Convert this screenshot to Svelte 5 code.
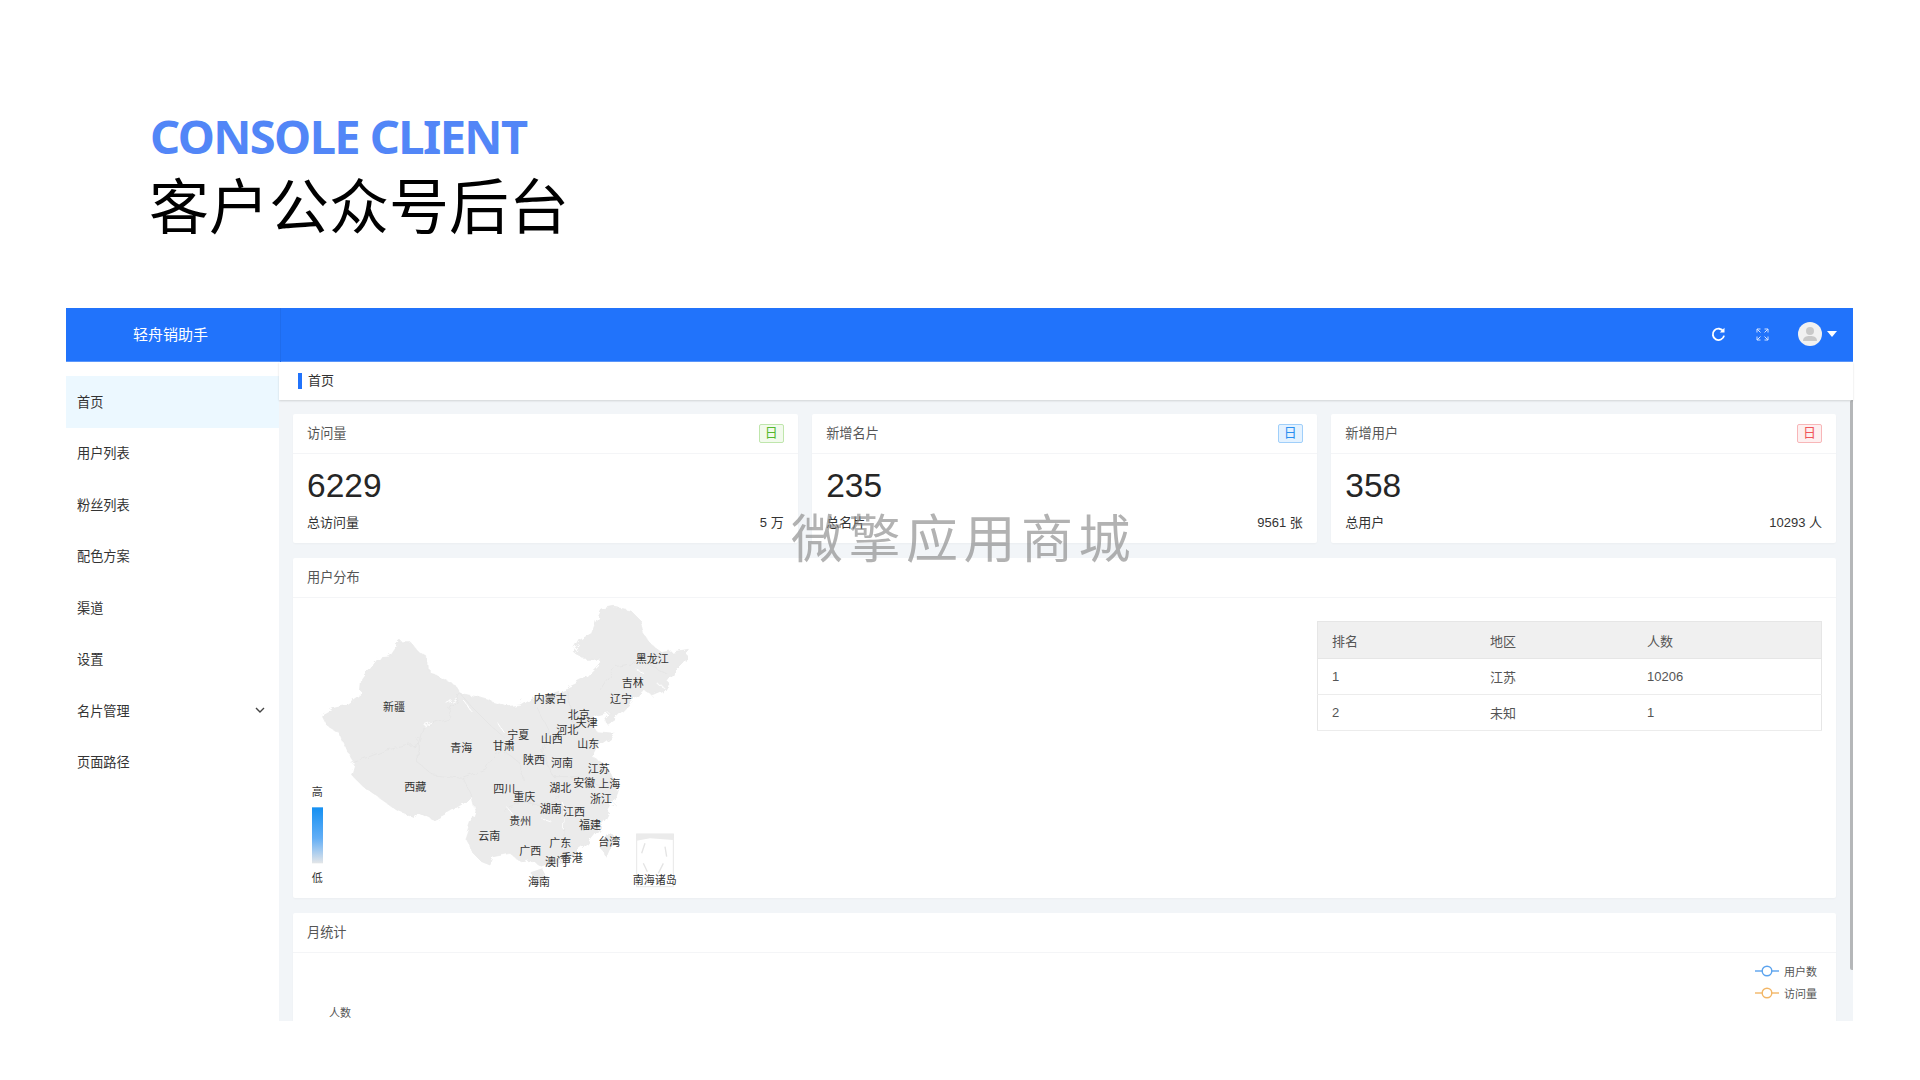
<script>
  const menu = [
    { name: '首页', active: true },
    { name: '用户列表' },
    { name: '粉丝列表' },
    { name: '配色方案' },
    { name: '渠道' },
    { name: '设置' },
    { name: '名片管理', sub: true },
    { name: '页面路径' }
  ];
  const stats = [
    { title: '访问量', tone: 'green', value: '6229', label: '总访问量', total: '5 万' },
    { title: '新增名片', tone: 'blue', value: '235', label: '总名片', total: '9561 张' },
    { title: '新增用户', tone: 'red', value: '358', label: '总用户', total: '10293 人' }
  ];
  const ranks = [
    { rank: 1, area: '江苏', count: 10206 },
    { rank: 2, area: '未知', count: 1 }
  ];
  const provinces = [
    ['黑龙江', 1087, 208], ['吉林', 1028, 278], ['辽宁', 993, 328], ['内蒙古', 781, 326],
    ['北京', 866, 374], ['天津', 890, 400], ['河北', 832, 420], ['宁夏', 685, 435],
    ['山西', 785, 447], ['甘肃', 641, 467], ['山东', 895, 461], ['青海', 514, 475],
    ['陕西', 732, 510], ['河南', 816, 520], ['江苏', 926, 538], ['新疆', 312, 350],
    ['西藏', 376, 591], ['四川', 643, 596], ['重庆', 703, 622], ['湖北', 811, 594],
    ['安徽', 883, 580], ['上海', 958, 582], ['浙江', 933, 628], ['湖南', 782, 656],
    ['江西', 852, 666], ['贵州', 691, 692], ['福建', 900, 706], ['云南', 598, 737],
    ['广东', 811, 760], ['台湾', 958, 755], ['广西', 721, 782], ['澳门', 798, 815],
    ['香港', 845, 805], ['海南', 747, 875], ['南海诸岛', 1094, 870]
  ];
  const china = 'M95 375 L130 355 175 345 210 320 215 265 260 205 300 200 330 155 360 155 385 185 410 200 412 240 450 265 495 285 510 310 560 320 610 335 650 350 690 345 730 320 790 310 830 295 880 270 925 225 930 205 880 205 850 185 870 150 905 130 920 90 935 60 975 52 1020 60 1050 90 1060 130 1085 165 1120 190 1195 178 1180 215 1160 235 1140 270 1120 300 1085 315 1060 300 1030 330 1000 360 975 385 950 400 945 385 960 365 920 375 900 395 920 425 975 430 950 450 920 470 905 500 940 520 960 550 985 590 965 650 945 690 920 720 880 770 840 800 790 820 760 830 745 825 730 810 700 820 660 790 610 800 600 825 575 815 550 790 525 745 540 700 555 660 545 620 520 640 470 670 430 690 380 665 370 680 320 660 270 625 220 590 185 555 195 520 180 500 150 430 110 405 Z';
  const borders = [
    'M410 405 L470 385 510 310 545 350 600 405 640 440',
    'M185 520 L290 480 385 460 400 410',
    'M385 460 L385 520 430 555 520 565 545 620',
    'M520 565 L590 540 610 500 640 480 690 520 700 570',
    'M640 660 L700 640 760 640 810 620 820 700 825 790',
    'M930 300 L975 230 1060 215 1130 250',
    'M740 350 L780 430 760 490 790 560 880 560 930 590',
    'M830 300 L850 400 900 395'
  ];
  const flecks = 'M470 340L500 325M525 335L545 365M400 405L430 395M620 395L640 425M820 640L818 715M650 650L665 670M760 690L790 700M1040 240L1060 248M1100 280L1120 290';
</script>

<div class="page">
  <header class="intro">
    <h1>CONSOLE CLIENT</h1>
    <h2>客户公众号后台</h2>
  </header>

  <div class="shot">
    <div class="topbar">
      <div class="brand">轻舟销助手</div>
      <div class="tools">
        <svg class="tool" width="15" height="15" viewBox="0 0 14 14" fill="none" stroke="#fff" stroke-width="1.7">
          <path d="M11.6 4.2A5.3 5.3 0 1 0 12.2 8" />
          <path d="M12.6 0.6V5.2H8.2" fill="#fff" stroke="none" />
        </svg>
        <svg class="tool" width="13" height="13" viewBox="0 0 13 13" fill="none" stroke="#d4e3ff" stroke-width="1">
          <path d="M1 4.5V1H4.5M1 1L4.5 4.5M12 4.5V1H8.5M12 1L8.5 4.5M1 8.5V12H4.5M1 12L4.5 8.5M12 8.5V12H8.5M12 12L8.5 8.5" />
        </svg>
        <div class="avatar">
          <svg width="24" height="24" viewBox="0 0 24 24" fill="#c9c9c9">
            <circle cx="12" cy="9" r="4" />
            <path d="M5 19C5 15 8 14 12 14S19 15 19 19Z" />
          </svg>
          <span class="caret"></span>
        </div>
      </div>
    </div>

    <div class="layout">
      <nav class="side">
        {#each menu as item}
          <div class="menu-item" class:active={item.active}>
            <span>{item.name}</span>
            {#if item.sub}
              <svg width="12" height="12" viewBox="0 0 12 12" fill="none" stroke="#444" stroke-width="1.4">
                <path d="M2 4L6 8L10 4" />
              </svg>
            {/if}
          </div>
        {/each}
      </nav>

      <main class="main">
        <div class="crumb"><span>首页</span></div>
        <div class="content">
          <div class="stats">
            {#each stats as s}
              <section class="card">
                <div class="card-head">
                  <span>{s.title}</span>
                  <span class="tag {s.tone}">日</span>
                </div>
                <div class="stat-body">
                  <div class="value">{s.value}</div>
                  <div class="stat-foot">
                    <span>{s.label}</span>
                    <span>{s.total}</span>
                  </div>
                </div>
              </section>
            {/each}
          </div>

          <section class="card">
            <div class="card-head">用户分布</div>
            <div class="map-body">
              <svg class="map" width="420" height="300" viewBox="9 24 1260 900">
                <defs>
                  <linearGradient id="range" x1="0" y1="0" x2="0" y2="1">
                    <stop offset="0" stop-color="#1590f2" />
                    <stop offset="0.55" stop-color="#62aef6" />
                    <stop offset="1" stop-color="#e4e6e8" />
                  </linearGradient>
                  <filter id="rough" x="-5%" y="-5%" width="110%" height="110%">
                    <feTurbulence type="fractalNoise" baseFrequency="0.035" numOctaves="3" seed="4" />
                    <feDisplacementMap in="SourceGraphic" scale="26" />
                  </filter>
                </defs>
                <g filter="url(#rough)">
                  <path d={china} fill="#ebebeb" stroke="#e8e8e8" stroke-width="2" stroke-linejoin="round" />
                  <path d="M725 850 L760 838 772 860 750 888 728 875Z" fill="#ebebeb" />
                  <path d="M960 725 L978 745 952 806 930 770Z" fill="#ebebeb" />
                  {#each borders as d}
                    <path {d} fill="none" stroke="#e3e3e3" stroke-width="2" />
                  {/each}
                  <path d={flecks} fill="none" stroke="#fff" stroke-width="3" />
                </g>
                <rect x="1040" y="732" width="110" height="158" fill="#fff" stroke="#e8e8e8" stroke-width="3" />
                <path d="M1040 732H1150V750L1080 745 1040 752Z" fill="#ebebeb" />
                <path d="M1065 760L1055 790M1060 820L1072 845M1125 770L1130 800M1120 820L1105 850" fill="none" stroke="#e4e4e4" stroke-width="4" />
                <rect x="66" y="652" width="33" height="168" fill="url(#range)" />
                <text class="map-label" x="82" y="605">高</text>
                <text class="map-label" x="82" y="863">低</text>
                {#each provinces as [name, x, y]}
                  <text class="map-label" {x} {y}>{name}</text>
                {/each}
              </svg>
              <table class="rank">
                <thead>
                  <tr><th>排名</th><th>地区</th><th>人数</th></tr>
                </thead>
                <tbody>
                  {#each ranks as r}
                    <tr><td>{r.rank}</td><td>{r.area}</td><td>{r.count}</td></tr>
                  {/each}
                </tbody>
              </table>
            </div>
          </section>

          <section class="card">
            <div class="card-head">月统计</div>
            <div class="chart-body">
              <div class="legend">
                <div class="legend-row">
                  <svg width="24" height="12" viewBox="0 0 24 12" fill="#fff" stroke="#5ba3ee" stroke-width="1.4">
                    <path d="M0 6H24" /><circle cx="12" cy="6" r="4.8" />
                  </svg>
                  <span>用户数</span>
                </div>
                <div class="legend-row">
                  <svg width="24" height="12" viewBox="0 0 24 12" fill="#fff" stroke="#f2b666" stroke-width="1.4">
                    <path d="M0 6H24" /><circle cx="12" cy="6" r="4.8" />
                  </svg>
                  <span>访问量</span>
                </div>
              </div>
              <div class="axis-name">人数</div>
            </div>
          </section>
          <div class="scroll-thumb"></div>
        </div>
      </main>
    </div>
  </div>

  <div class="watermark">微擎应用商城</div>
</div>

<style>
  :global(body) {
    margin: 0;
    background: #fff;
    font-family: "Liberation Sans", "Noto Sans CJK SC", sans-serif;
  }

  .page {
    position: relative;
    height: 1080px;
    overflow: hidden;
  }

  .intro {
    height: 308px;
    padding: 109px 0 0 150px;
    box-sizing: border-box;
  }
  h1 {
    margin: 0;
    font-family: "Noto Sans", sans-serif;
    font-size: 47px;
    line-height: 54px;
    font-weight: 700;
    letter-spacing: -1.6px;
    color: #5286f7;
  }
  h2 {
    margin: 4px 0 0 -1px;
    font-family: "Noto Sans CJK SC", sans-serif;
    font-size: 60px;
    line-height: 72px;
    font-weight: 400;
    color: #000;
  }

  .shot {
    margin-left: 66px;
    width: 1787px;
  }

  .topbar {
    display: flex;
    justify-content: space-between;
    height: 54px;
    background: #2173fb;
    box-shadow: inset 0 -1px 0 #5b97fb;
    color: #fff;
  }
  .brand {
    width: 215px;
    box-sizing: border-box;
    padding-left: 67px;
    font-size: 15px;
    line-height: 53px;
    border-right: 1px solid #1f6cec;
  }
  .tools {
    display: flex;
    align-items: center;
    padding: 0 16px 2px 0;
  }
  .tool {
    margin-right: 30px;
  }
  .avatar {
    display: flex;
    align-items: center;
    gap: 5px;
    margin-left: -1px;
  }
  .avatar svg {
    background: #f1f1f1;
    border-radius: 50%;
  }
  .caret {
    border: 5px solid transparent;
    border-top: 6px solid #fff;
    border-bottom: 0;
  }

  .layout {
    display: flex;
    height: 659px;
  }

  .side {
    width: 213px;
    padding-top: 14px;
    box-sizing: border-box;
    flex-shrink: 0;
  }
  .menu-item {
    display: flex;
    align-items: center;
    justify-content: space-between;
    height: 51.5px;
    padding: 0 13px 1px 11px;
    box-sizing: border-box;
    font-size: 13.2px;
    color: #333;
  }
  .menu-item.active {
    background: #ecf8ff;
  }

  .main {
    flex: 1;
    display: flex;
    flex-direction: column;
    min-width: 0;
  }
  .crumb {
    position: relative;
    z-index: 1;
    height: 38px;
    padding-left: 19px;
    display: flex;
    align-items: center;
    box-shadow: 0 1px 2px rgba(0, 0, 0, 0.14);
    font-size: 13px;
    color: #333;
  }
  .crumb span {
    border-left: 4px solid #2173fb;
    padding-left: 6px;
    line-height: 16px;
  }

  .content {
    position: relative;
    flex: 1;
    overflow: hidden;
    background: #f2f5f8;
    padding: 14px 17px 0 14px;
    display: flex;
    flex-direction: column;
    gap: 15px;
  }
  .scroll-thumb {
    position: absolute;
    top: 0;
    right: 0;
    width: 3px;
    height: 570px;
    background: #b5b7b9;
    border-radius: 2px 0 0 2px;
  }

  .stats {
    display: grid;
    grid-template-columns: repeat(3, 1fr);
    gap: 14.5px;
  }
  .card {
    background: #fff;
    border-radius: 2px;
    box-shadow: 0 1px 2px rgba(0, 0, 0, 0.03);
    flex-shrink: 0;
  }
  .card-head {
    display: flex;
    align-items: center;
    justify-content: space-between;
    padding: 0 14px 3px;
    box-sizing: border-box;
    height: 40px;
    border-bottom: 1px solid #f4f5f7;
    font-size: 13.2px;
    color: #555;
  }

  .tag {
    width: 25px;
    height: 19px;
    margin-top: 2px;
    box-sizing: border-box;
    border: 1px solid;
    border-radius: 2px;
    font-size: 13px;
    line-height: 16px;
    text-align: center;
  }
  .tag.green { color: #55b82e; background: #f2faed; border-color: #bfe6ac; }
  .tag.blue { color: #2a8ff0; background: #e4f2ff; border-color: #a0cffa; }
  .tag.red { color: #f0555a; background: #fdf0f0; border-color: #f8b6b8; }

  .stat-body {
    padding: 11px 14px 0;
    height: 78px;
  }
  .value {
    font-size: 33.5px;
    line-height: 42px;
    color: #262626;
  }
  .stat-foot {
    display: flex;
    justify-content: space-between;
    margin-top: 6px;
    font-size: 13px;
    line-height: 20px;
    color: #333;
  }

  .map-body {
    display: flex;
    justify-content: space-between;
    align-items: flex-start;
    height: 300px;
    padding-right: 14px;
  }
  .map {
    display: block;
  }
  .map-label {
    font-size: 33px;
    fill: #333;
    text-anchor: middle;
    dominant-baseline: central;
  }

  .rank {
    width: 505px;
    table-layout: fixed;
    margin-top: 23px;
    border-collapse: collapse;
    border: 1px solid #e6e6e6;
    font-size: 13px;
    color: #555;
  }
  .rank th {
    height: 36px;
    padding: 0 0 0 14px;
    background: #f0f0f0;
    font-weight: 400;
    text-align: left;
    border-bottom: 1px solid #e6e6e6;
  }
  .rank td {
    height: 35px;
    padding: 0 0 0 14px;
    border-bottom: 1px solid #ececec;
  }
  .rank th:nth-child(1) { width: 144px; }
  .rank th:nth-child(2) { width: 143px; }

  .chart-body {
    position: relative;
    height: 120px;
  }
  .legend {
    position: absolute;
    top: 7px;
    right: 19px;
    font-size: 11px;
    color: #555;
  }
  .legend-row {
    display: flex;
    align-items: center;
    gap: 5px;
    height: 22px;
  }
  .axis-name {
    position: absolute;
    left: 36px;
    top: 51px;
    font-size: 11px;
    color: #555;
  }

  .watermark {
    position: absolute;
    left: 791px;
    top: 500px;
    font-family: "Noto Sans CJK SC", sans-serif;
    font-size: 52px;
    line-height: 72px;
    font-weight: 400;
    letter-spacing: 5.5px;
    color: rgba(130, 130, 130, 0.62);
    white-space: nowrap;
  }
</style>
